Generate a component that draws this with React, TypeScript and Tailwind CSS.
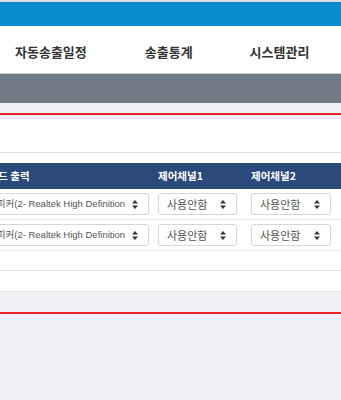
import React from "react";

const font = { fontFamily: '"Noto Sans CJK KR", "Noto Sans", sans-serif' };
const latinFont = { fontFamily: '"Liberation Sans", "Noto Sans CJK KR", sans-serif' };

function SortArrows() {
  return (
    <svg width="6" height="9" viewBox="0 0 6 9" className="shrink-0">
      <path d="M3 0 L6 3.5 H0 Z" fill="#333" />
      <path d="M3 9 L6 5.5 H0 Z" fill="#333" />
    </svg>
  );
}

function FakeSelect({
  label,
  width,
  text = "text-[11px]",
  style,
}: {
  label: string;
  width: string;
  text?: string;
  style?: React.CSSProperties;
}) {
  return (
    <div
      className={`h-[22px] ${width} flex items-center gap-[6px] border border-[#d4d7dd] rounded-[3px] bg-white pl-[8px] pr-[10px] ${text} text-[#555] whitespace-nowrap`}
      style={style}
    >
      <span className="flex-1 overflow-hidden">{label}</span>
      <SortArrows />
    </div>
  );
}

const rows = [
  { device: "스피커(2- Realtek High Definition Audio)" },
  { device: "스피커(2- Realtek High Definition Audio)" },
];

export default function App() {
  return (
    <div className="w-[341px] h-[400px] overflow-hidden bg-[#f0f1f5]" style={font}>
      {/* top bar */}
      <div className="h-[2px] bg-[#d9dcdf]" />
      <div className="h-[24px] bg-[#0a8bd0]" />

      {/* nav */}
      <nav className="h-[48px] pt-[5px] bg-white border-b border-[#c9cdd2] flex items-center text-[13px] font-bold text-[#333]">
        <span className="ml-[15px]">자동송출일정</span>
        <span className="ml-[58px]">송출통계</span>
        <span className="ml-[57px]">시스템관리</span>
      </nav>

      {/* title band */}
      <div className="h-[29px] bg-[#6f7a85]" />

      <div className="h-[10px]" />
      <div className="h-[2px] bg-[#e8222b]" />
      <div className="h-[3px]" />

      {/* panel */}
      <div className="bg-white border-y border-[#e1e3e7]">
        <div className="h-[34px] border-b border-[#e1e3e7]" />
        <div className="pt-[10px]">
          <div className="-ml-[21px] w-[400px]">
            <div className="h-[26px] bg-[#2b4a7b] grid grid-cols-[179px_93px_1fr] items-center text-[10.5px] font-bold text-white">
              <span>사운드 출력</span>
              <span>제어채널1</span>
              <span>제어채널2</span>
            </div>
            {rows.map((r, i) => (
              <div
                key={i}
                className="h-[31px] grid grid-cols-[179px_93px_1fr] items-center border-b border-[#e6e8eb]"
              >
                <FakeSelect label={r.device} width="w-[170px]" text="text-[9.5px]" style={latinFont} />
                <FakeSelect label="사용안함" width="w-[79px]" />
                <FakeSelect label="사용안함" width="w-[80px]" />
              </div>
            ))}
          </div>
          <div className="h-[19px]" />
        </div>
        <div className="h-[21px] border-t border-[#e1e3e7]" />
      </div>

      <div className="h-[20px]" />
      <div className="h-[2px] bg-[#e8222b]" />
    </div>
  );
}
